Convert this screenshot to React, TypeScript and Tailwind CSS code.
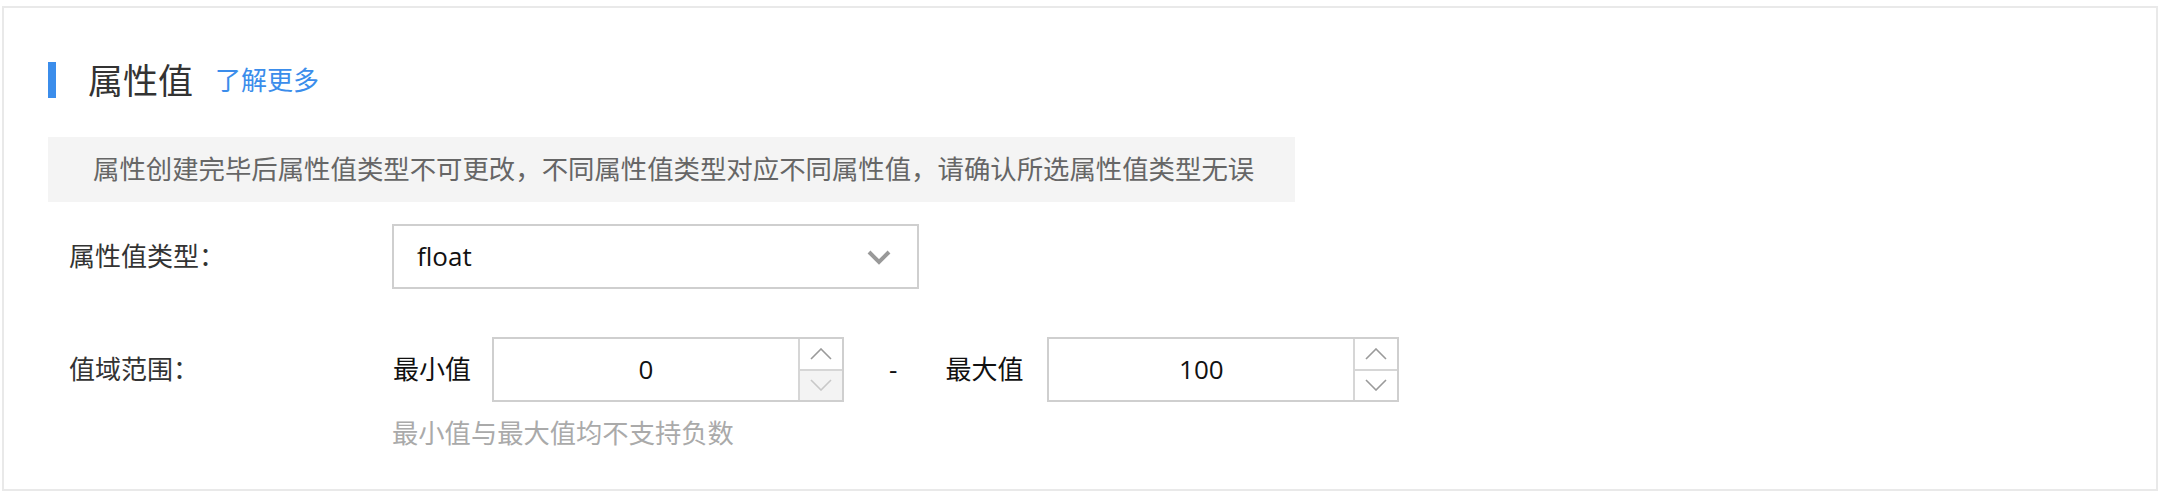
import React from "react";

function SpinArrow({ dir, color }: { dir: "up" | "down"; color: string }) {
  return (
    <svg width="22" height="12" viewBox="0 0 22 12" fill="none">
      {dir === "up" ? (
        <polyline points="1,11 11,1 21,11" stroke={color} strokeWidth="1.6" />
      ) : (
        <polyline points="1,1 11,11 21,1" stroke={color} strokeWidth="1.6" />
      )}
    </svg>
  );
}

function NumberInput({ value, downDisabled }: { value: string; downDisabled?: boolean }) {
  return (
    <div className="flex h-[65px] w-[352px] border-2 border-[#cfcfcf] bg-white">
      <div className="flex flex-1 items-center justify-center text-[26px] text-[#111]">{value}</div>
      <div className="flex w-[44px] flex-col border-l-2 border-[#d6d6d6]">
        <div className="flex flex-1 items-center justify-center">
          <SpinArrow dir="up" color="#9a9a9a" />
        </div>
        <div
          className={
            downDisabled
              ? "flex flex-1 items-center justify-center border-t-2 border-[#d6d6d6] bg-[#f3f3f3]"
              : "flex flex-1 items-center justify-center border-t-2 border-[#d6d6d6] bg-white"
          }
        >
          <SpinArrow dir="down" color={downDisabled ? "#c8c8c8" : "#9a9a9a"} />
        </div>
      </div>
    </div>
  );
}

export default function App() {
  return (
    <div
      className="h-[498px] w-[2164px] bg-white pl-[2px] pt-[6px]"
      style={{ fontFamily: '"Open Sans", "Noto Sans CJK SC", sans-serif' }}
    >
      <div className="h-[485px] w-[2156px] border-2 border-[#e9e9e9] pl-[44px] pt-[54px]">
        {/* Title */}
        <div className="flex h-[36px] items-center">
          <div className="h-[36px] w-[8px] bg-[#3b8deb]" />
          <div className="ml-[32px] text-[35px] leading-none text-[#333]">属性值</div>
          <a className="ml-[22px] text-[26px] leading-none text-[#3b8deb]">了解更多</a>
        </div>

        {/* Notice */}
        <div className="mt-[39px] flex h-[65px] w-[1247px] items-center bg-[#f4f4f4] pl-[45px] text-[26.4px] text-[#666]">
          属性创建完毕后属性值类型不可更改，不同属性值类型对应不同属性值，请确认所选属性值类型无误
        </div>

        {/* Row 1 */}
        <div className="mt-[22px] flex items-center pl-[21px]">
          <div className="w-[323px] text-[26px] text-[#333]">属性值类型：</div>
          <div className="flex h-[65px] w-[527px] items-center justify-between border-2 border-[#cfcfcf] pl-[23px] pr-[26px]">
            <span className="text-[26px] text-[#111]">float</span>
            <svg width="24" height="16" viewBox="0 0 24 16" fill="none">
              <polyline points="2,3 12,13 22,3" stroke="#999" strokeWidth="4" />
            </svg>
          </div>
        </div>

        {/* Row 2 */}
        <div className="mt-[48px] flex pl-[21px]">
          <div className="flex h-[65px] w-[323px] items-center text-[26px] text-[#333]">值域范围：</div>
          <div className="flex flex-col">
            <div className="flex items-center">
              <span className="pl-[1px] text-[26px] text-[#111]">最小值</span>
              <div className="ml-[21px]">
                <NumberInput value="0" downDisabled />
              </div>
              <span className="ml-[45px] mr-[48px] text-[26px] text-[#111]">-</span>
              <span className="text-[26px] text-[#111]">最大值</span>
              <div className="ml-[24px]">
                <NumberInput value="100" />
              </div>
            </div>
            <div className="mt-[13px] text-[26.3px] leading-[36px] text-[#aaa]">最小值与最大值均不支持负数</div>
          </div>
        </div>
      </div>
    </div>
  );
}
